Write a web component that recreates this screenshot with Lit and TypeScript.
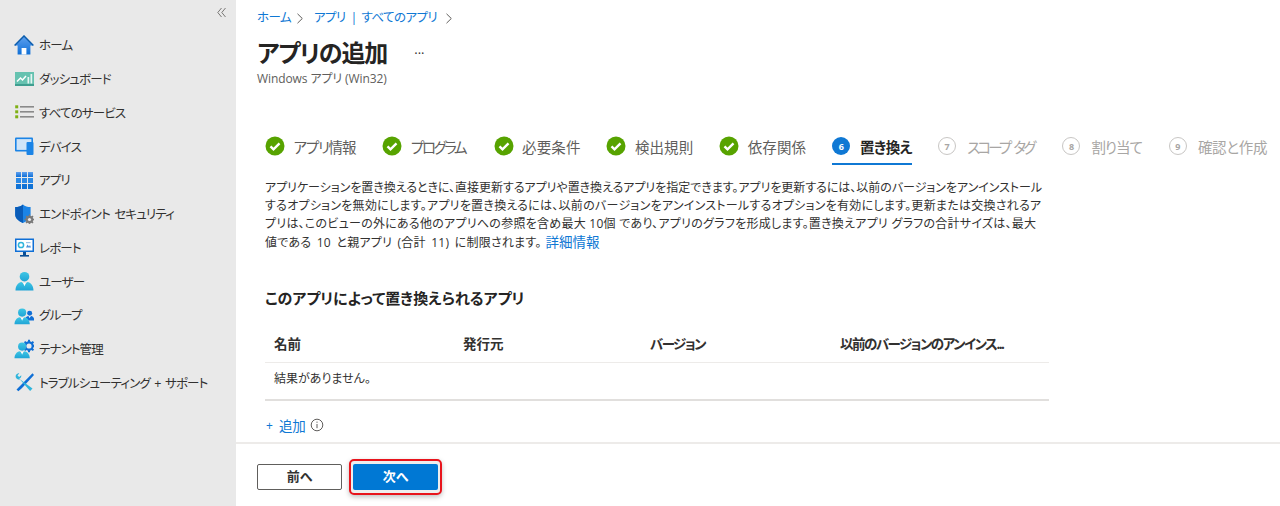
import { LitElement, html, css, svg } from "lit";
import { customElement } from "lit/decorators.js";

const grad = svg`<defs>
<linearGradient id="gb" x1="0" y1="0" x2="0" y2="1"><stop offset="0" stop-color="#5ea0ef"/><stop offset="1" stop-color="#0f6fd6"/></linearGradient>
<linearGradient id="gu" x1="0" y1="0" x2="0" y2="1"><stop offset="0" stop-color="#3fc6e4"/><stop offset="1" stop-color="#1fa4d6"/></linearGradient>
</defs>`;

const person = (x: number, y: number, s: number, c = "url(#gu)") => svg`<g transform="translate(${x} ${y}) scale(${s})">
<circle cx="9" cy="5.200" r="4.800" fill="${c}"/>
<path d="M0 19c0-4.800 3-8 6-8.400l3 2.200 3-2.200c3 .4 6 3.600 6 8.400z" fill="${c}"/>
<path d="M7.600 11.400h2.800L9 14.800z" fill="#fff"/></g>`;

const icons: Record<string, unknown> = {
  home: svg`<path d="M10 1.600 1 10.400h2.600V19.500h12.800v-9.100H19z" fill="url(#gb)"/><path d="M.6 10.600 10 1l9.400 9.600" fill="none" stroke="#0a5cad" stroke-width="1.500"/><rect x="7.600" y="13" width="4.800" height="6.500" fill="#fff"/>`,
  dash: svg`<rect x="1" y="3" width="19" height="14" fill="#66c2b0"/><rect x="1" y="15" width="19" height="2" fill="#3f9e90"/><path d="M3 12.500 6.500 9l2 2 3.500-4" fill="none" stroke="#fff" stroke-width="1.500"/><rect x="13.500" y="8" width="1.700" height="6.500" fill="#e6f5f2"/><rect x="16.500" y="5" width="1.700" height="9.500" fill="#e6f5f2"/>`,
  list: svg`<g fill="#7fb015"><rect x="1.200" y="3.300" width="3" height="3"/><rect x="1.200" y="8.300" width="3" height="3"/><rect x="1.200" y="13.300" width="3" height="3"/></g><g fill="#8a8a8a"><rect x="6" y="4" width="14" height="1.600"/><rect x="6" y="9" width="14" height="1.600"/><rect x="6" y="14" width="14" height="1.600"/></g>`,
  device: svg`<rect x="1" y="1.500" width="18" height="14" rx="1" fill="#1b84e6"/><rect x="2.600" y="3.100" width="14.800" height="10.800" fill="#cfe4f8"/><rect x="12.500" y="6" width="7" height="13" rx="1" fill="#1b84e6"/>`,
  apps: svg`<g fill="url(#gb)"><rect x="2" y="2" width="5" height="5"/><rect x="8" y="2" width="5" height="5"/><rect x="14" y="2" width="5" height="5"/></g><g fill="#2a89e6"><rect x="2" y="8" width="5" height="5"/><rect x="8" y="8" width="5" height="5"/><rect x="14" y="8" width="5" height="5"/></g><g fill="#1173d6"><rect x="2" y="14" width="5" height="5"/><rect x="8" y="14" width="5" height="5"/><rect x="14" y="14" width="5" height="5"/></g>`,
  shield: svg`<path d="M9 .5c2 1.800 4.600 2.600 7.600 2.600v7.400c0 4-3.400 6.600-7.600 8.400C4.800 17.100 1.200 14.500 1.200 10.500V3.100C4.200 3.100 7 2.300 9 .5z" fill="#1b84e6"/><path d="M9 .5v18.400C4.800 17.100 1.200 14.500 1.200 10.500V3.100C4.200 3.100 7 2.300 9 .5z" fill="#0a5cb8"/><g stroke="#7a7a7a" stroke-width="1.500"><path d="M15.500 10.500v10M10.500 15.500h10M12 12l7 7M19 12l-7 7"/></g><circle cx="15.500" cy="15.500" r="3.800" fill="#7a7a7a"/><circle cx="15.500" cy="15.500" r="1.600" fill="#e9e9e9"/>`,
  report: svg`<rect x="1" y="1.500" width="19" height="13.500" fill="#0f6fd6"/><rect x="2.500" y="3" width="16" height="10.500" fill="#fff"/><circle cx="7" cy="8" r="2.600" fill="none" stroke="#2fb5dc" stroke-width="1.500"/><path d="M12 10.500l1.500-3 1.500 2 1-1.500 1 2.500z" fill="#4a90d9"/><rect x="12" y="5" width="4.500" height="1.200" fill="#9cc4ea"/><rect x="9" y="15" width="3" height="3" fill="#0a4f96"/><rect x="6" y="18" width="9" height="1.600" fill="#0a4f96"/>`,
  user: svg`${person(1.500, .5, 1)}`,
  group: svg`${person(11, 5.500, .52, "#0f6fd6")}${person(.5, 3.200, .85)}`,
  tenant: svg`<g transform="translate(15 7)"><circle r="3.500" fill="none" stroke="#0f6fd6" stroke-width="2.600"/><path d="M0-6.200V6.200M-6.200 0H6.200M-4.400-4.400l8.800 8.800M4.400-4.400l-8.800 8.800" stroke="#0f6fd6" stroke-width="2"/><circle r="2.600" fill="#e9e9e9"/></g>${person(.5, 3.200, .85)}`,
  tools: svg`<path d="M18.500 1.200 7 13l-2 2-2.500 2.500 1.800 1.800L7 17l2-2L20 3z" fill="#0f6fd6"/><path d="M2 5.800C1 3.500 2.600 1.200 5.300 1.300L3.500 3.400l1.700 1.700 2.100-1.800c.2 1.800-.8 3.100-2.100 3.400L18.500 16.500l-2.400 2.500L6 7.500C4.200 7.800 2.700 7.200 2 5.800z" fill="#2fb5dc"/>`,
};

const nav: [string, string][] = [
  ["home", "ホーム"], ["dash", "ダッシュボード"], ["list", "すべてのサービス"], ["device", "デバイス"],
  ["apps", "アプリ"], ["shield", "エンドポイント セキュリティ"], ["report", "レポート"], ["user", "ユーザー"],
  ["group", "グループ"], ["tenant", "テナント管理"], ["tools", "トラブルシューティング + サポート"],
];
// Label plus the tracking that gives each label the width of the reference's narrow kana.
const done: [string, number][] = [["アプリ情報", -1.200], ["プログラム", -2.400], ["必要条件", 0.100], ["検出規則", 0.100], ["依存関係", 0.100]];
const later: [string, string, number][] = [["7", "スコープ タグ", -2.800], ["8", "割り当て", -1], ["9", "確認と作成", -0.300]];
// Description lines with the tracking that makes each line as long as in the reference.
const lines: [string, number, number][] = [
  ["アプリケーションを置き換えるときに、直接更新するアプリや置き換えるアプリを指定できます。アプリを更新するには、以前のバージョンをアンインストール", -0.030, 0],
  ["するオプションを無効にします。アプリを置き換えるには、以前のバージョンをアンインストールするオプションを有効にします。更新または交換されるア", 0.270, 0],
  ["プリは、このビューの外にある他のアプリへの参照を含め最大 10個 であり、アプリのグラフを形成します。置き換えアプリ グラフの合計サイズは、最大", 0.260, 0],
  ["値である 10 と親アプリ (合計 11) に制限されます。", 0.250, 2],
];

@customElement("app-root")
export class AppRoot extends LitElement {
  static styles = css`
    :host { display: block; width: 1280px; height: 506px; overflow: hidden; background: #fff; color: #323130;
      font-family: "Open Sans", "Noto Sans CJK JP", sans-serif; font-size: 12px; font-feature-settings: "palt"; }
    * { box-sizing: border-box; }
    .app { display: flex; height: 506px; }
    .side { width: 236px; flex: none; background: #e9e9e9; padding: 7px 0 0 14px; display: flex; flex-direction: column; }
    .collapse { align-self: flex-end; margin: 0 10px 0 0; height: 14px; display: flex; }
    .nav { margin-top: 7px; display: flex; flex-direction: column; }
    .item { height: 33.750px; display: flex; align-items: center; gap: 5px; font-size: 12.500px; letter-spacing: -.85px; word-spacing: 2px; color: #323130; white-space: nowrap; }
    .item svg { width: 20px; height: 20px; flex: none; }
    .main { flex: 1; min-width: 0; display: flex; flex-direction: column; }
    .content { flex: 1; min-height: 0; }
    .crumbs { height: 36px; padding: 0 0 0 21px; display: flex; align-items: center; gap: 6px; font-size: 12.500px; letter-spacing: -.6px; word-spacing: 2.200px; color: #0f78d4; line-height: 18px; }
    .crumbs svg { width: 7px; height: 11px; margin-right: 4px; }
    .crumbs .path { margin-right: 3px; }
    .title { display: flex; align-items: center; padding-left: 21px; height: 34px; }
    h1 { margin: 0; font-size: 24px; letter-spacing: -1.100px; font-weight: 700; color: #252423; line-height: 34px; }
    .dots { margin-left: 27px; font-size: 13px; color: #323130; line-height: 14px; }
    .sub { padding-left: 21px; font-size: 12px; letter-spacing: -.1px; line-height: 18px; color: #605e5c; }
    .steps { margin: 42px 0 0 29px; display: flex; gap: 26px; height: 35px; white-space: nowrap; }
    .step { height: 35px; display: flex; align-items: center; gap: 8.500px; font-size: 14.500px; color: #605e5c; padding-bottom: 3px; position: relative; }
    .step svg { width: 20px; height: 20px; flex: none; }
    .step.cur { color: #252423; font-weight: 700; gap: 10px; letter-spacing: -.6px; }
    .step.cur::after { content: ""; position: absolute; left: 0; right: 0; bottom: 0; height: 2px; background: #0f78d4; }
    .step.off { color: #a8a6a4; gap: 11px; word-spacing: 3px; }
    .num { width: 18px; height: 18px; flex: none; border-radius: 50%; display: flex; align-items: center; justify-content: center; font-size: 9px; font-weight: 700; }
    .cur .num { background: #0f78d4; color: #fff; }
    .off .num { border: 1.500px solid #c8c6c4; color: #a8a6a4; }
    .desc { margin: 14px 0 0 29px; font-size: 12px; line-height: 18px; color: #323130; white-space: nowrap; }
    .line { display: block; height: 18px; }
    a { color: #0f78d4; text-decoration: none; font-size: 13.500px; letter-spacing: 0; word-spacing: 0; line-height: 18px; margin-left: 4px; }
    h2 { margin: 36px 0 0 29px; font-size: 15px; font-weight: 700; line-height: 22px; color: #252423; }
    table { margin: 18px 0 0 29px; width: 784px; border-collapse: collapse; table-layout: fixed; }
    th { height: 35px; padding: 0 9px 2px; text-align: left; font-weight: 700; font-size: 13.500px; color: #323130; border-bottom: 1px solid #edebe9; }
    th.tight { letter-spacing: -1.500px; }
    td { height: 38px; padding: 0 9px 6px; border-bottom: 2px solid #e1dfdd; color: #323130; font-size: 12px; }
    .add { margin: 13px 0 0 30px; height: 22px; display: flex; align-items: center; gap: 4px; font-size: 13.500px; color: #0f78d4; }
    .add svg { width: 14px; height: 14px; }
    .plus { font-size: 12px; margin-right: 2px; }
    .foot { height: 64px; flex: none; border-top: 2px solid #edebe9; padding: 20px 0 0 21px; display: flex; align-items: flex-start; gap: 7px; }
    button { width: 85px; height: 26px; border-radius: 2px; font: 700 13px "Open Sans", "Noto Sans CJK JP", sans-serif; font-feature-settings: "palt"; cursor: pointer; padding: 0 0 3px; }
    .prev { background: #fff; color: #323130; border: 1px solid #605e5c; }
    .next { background: #0078d4; color: #fff; border: 0; }
    .ring { margin-top: -5px; padding: 3px 2px; height: 36px; border: 2px solid #e8141c; border-radius: 5px; box-shadow: 0 2px 5px rgba(0,0,0,.25); background: #eeeeee; display: flex; }
  `;

  render() {
    return html`<div class="app">
      <aside class="side">
        <div class="collapse"><svg width="9" height="12" viewBox="0 0 9 12" fill="none" stroke="#797775" stroke-width="1"><path d="M4.500 1 .8 5.500 4.500 10M8.500 1 4.800 5.500 8.500 10"/></svg></div>
        <nav class="nav">
          ${nav.map(([i, t]) => html`<div class="item"><svg viewBox="0 0 20 20">${grad}${icons[i]}</svg><span>${t}</span></div>`)}
        </nav>
      </aside>
      <main class="main">
        <div class="content">
          <div class="crumbs"><span>ホーム</span>${this.chev()}<span class="path">アプリ | すべてのアプリ</span>${this.chev()}</div>
          <div class="title"><h1>アプリの追加</h1><span class="dots">···</span></div>
          <div class="sub">Windows アプリ (Win32)</div>
          <div class="steps">
            ${done.map(([t, ls]) => html`<div class="step"><svg viewBox="0 0 20 20"><circle cx="10" cy="10" r="9.500" fill="#57a300"/><path d="M5.500 10.300l3 3 6-6" fill="none" stroke="#fff" stroke-width="2.400"/></svg><span style="letter-spacing:${ls}px;margin-right:${-ls}px">${t}</span></div>`)}
            <div class="step cur"><span class="num">6</span><span>置き換え</span></div>
            ${later.map(([n, t, ls]) => html`<div class="step off"><span class="num">${n}</span><span style="letter-spacing:${ls}px;margin-right:${-ls}px">${t}</span></div>`)}
          </div>
          <p class="desc">${lines.map(([t, ls, ws], i) => html`<span class="line" style="letter-spacing:${ls}px;word-spacing:${ws}px">${t}${i === lines.length - 1 ? html`<a>詳細情報</a>` : ""}</span>`)}</p>
          <h2>このアプリによって置き換えられるアプリ</h2>
          <table>
            <colgroup><col style="width:189px" /><col style="width:187px" /><col style="width:190px" /><col /></colgroup>
            <thead><tr><th>名前</th><th>発行元</th><th class="tight">バージョン</th><th class="tight">以前のバージョンのアンインス...</th></tr></thead>
            <tbody><tr><td colspan="4">結果がありません。</td></tr></tbody>
          </table>
          <div class="add"><span class="plus">+</span><span>追加</span><svg viewBox="0 0 14 14" fill="none" stroke="#605e5c"><circle cx="7" cy="7" r="5.800"/><path d="M7 6v4.200M7 3.600v1.200"/></svg></div>
        </div>
        <footer class="foot">
          <button class="prev">前へ</button>
          <div class="ring"><button class="next">次へ</button></div>
        </footer>
      </main>
    </div>`;
  }

  chev() {
    return html`<svg viewBox="1 0 7 11" fill="none" stroke="#605e5c" stroke-width="1"><path d="M1.500 .8 6.300 5.500 1.500 10.200"/></svg>`;
  }
}
